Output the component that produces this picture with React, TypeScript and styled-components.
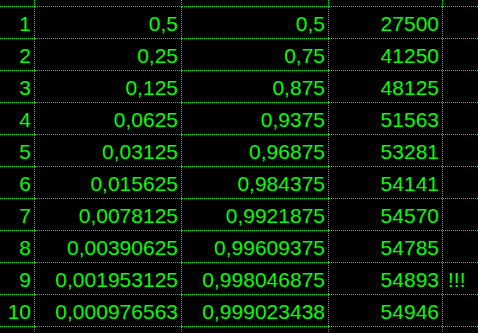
import React from "react"
import styled, { createGlobalStyle } from "styled-components"

const Global = createGlobalStyle`
html, body {
  margin: 0;
  padding: 0;
  background: #000;
  overflow: hidden;
}
`

const rows = [
  ["1", "0,5", "0,5", "27500", ""],
  ["2", "0,25", "0,75", "41250", ""],
  ["3", "0,125", "0,875", "48125", ""],
  ["4", "0,0625", "0,9375", "51563", ""],
  ["5", "0,03125", "0,96875", "53281", ""],
  ["6", "0,015625", "0,984375", "54141", ""],
  ["7", "0,0078125", "0,9921875", "54570", ""],
  ["8", "0,00390625", "0,99609375", "54785", ""],
  ["9", "0,001953125", "0,998046875", "54893", "!!!"],
  ["10", "0,000976563", "0,999023438", "54946", ""],
]

const App = () => {
  return (
    <Screen>
      <Global />
      <Sheet>
        {[0, 1, 2, 3, 4].map((c) => (
          <Cell key={"top" + c} />
        ))}
        {rows.map((r, i) =>
          r.map((v, c) => (
            <Cell key={i + "-" + c} $left={c === 4}>
              {v}
            </Cell>
          ))
        )}
        {[0, 1, 2, 3, 4].map((c) => (
          <Cell key={"end" + c} />
        ))}
      </Sheet>
    </Screen>
  )
}

export default App

const Screen = styled.div`
width: 478px;
height: 333px;
background: #000;
overflow: hidden;
`
const Sheet = styled.div`
display: grid;
grid-template-columns: 35px 147px 147px 114px 60px;
grid-template-rows: 7px repeat(10, 32px) 32px;
width: 503px;
`
// dotted grid lines, 1px on / 1px off
const Cell = styled.div<{ $left?: boolean }>`
box-sizing: border-box;
background-image:
  linear-gradient(to bottom, #00f000 50%, transparent 50%),
  linear-gradient(to right, #00f000 50%, transparent 50%);
background-size: 1px 2px, 2px 1px;
background-position: right top, left bottom;
background-repeat: repeat-y, repeat-x;
color: #00ff00;
font-family: "Liberation Sans", Arial, sans-serif;
font-size: 21px;
line-height: 28px;
padding: 3px ${(p) => (p.$left ? "0" : "4px")} 0 ${(p) => (p.$left ? "5px" : "0")};
text-align: ${(p) => (p.$left ? "left" : "right")};
white-space: nowrap;
overflow: hidden;
`
